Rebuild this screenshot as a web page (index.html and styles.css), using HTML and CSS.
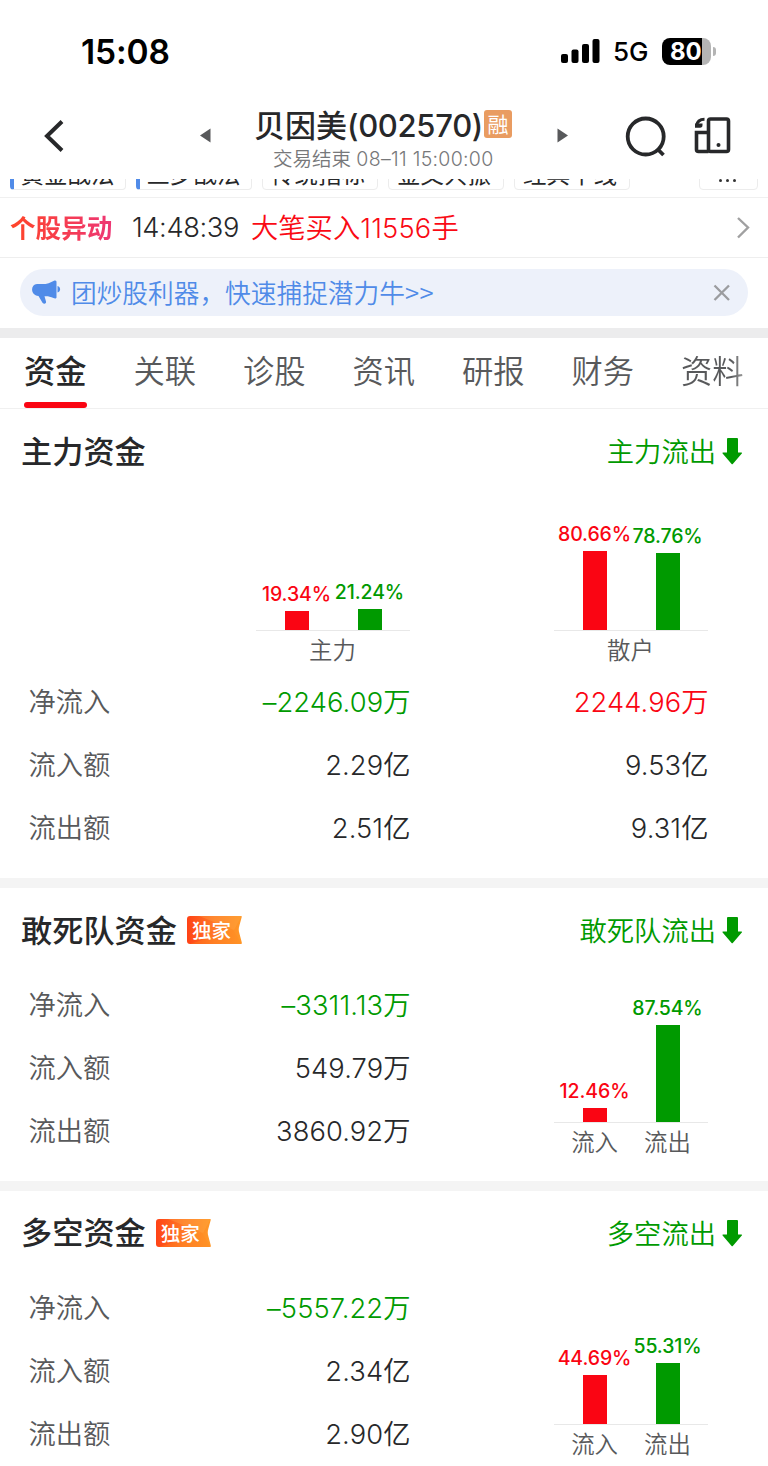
FILE: index.html
```html
<!DOCTYPE html>
<html lang="zh-CN">
<head>
<meta charset="utf-8">
<title>贝因美(002570)</title>
<link rel="stylesheet" href="styles.css">
</head>
<body>
<svg class="defs" width="0" height="0">
  <symbol id="arrow-down" viewBox="0 0 20 27"><path d="M6 0h9a1 1 0 0 1 1 1v13.500h3.500q.9.300.300 1.100l-9 10.300q-.6.500-1.200 0l-9-10.300q-.5-.8.300-1.100H5V1a1 1 0 0 1 1-1z" fill="#009a00"/></symbol>
  <linearGradient id="ribbon-fill" x1="0" y1="0" x2="1" y2="0"><stop offset="0" stop-color="#ff4216"/><stop offset=".5" stop-color="#ff7a27"/><stop offset="1" stop-color="#ff9928"/></linearGradient>
  <symbol id="ribbon" viewBox="0 0 55 28"><path d="M3 0H54Q55.200.3 54.600 1.500L52.300 10Q51.200 13.500 52.300 17L54.800 26.500Q55 28 54 28H3Q0 28 0 25V3Q0 0 3 0z" fill="url(#ribbon-fill)"/><path d="M46 14L54.800 28H3Z" fill="#ff8a20" opacity=".35"/><path d="M12 0H54.500L47 14z" fill="#ffab4d" opacity=".3"/></symbol>
</svg>
<div class="screen">
  <div class="status">
    <span class="clock">15:08</span>
    <svg class="signal" viewBox="0 0 39 25" width="39" height="25"><rect x="0" y="15" width="7" height="9" rx="2"/><rect x="10.500" y="10.500" width="7" height="13.500" rx="2"/><rect x="21" y="5" width="7" height="19" rx="2"/><rect x="31.500" y="0" width="7" height="24" rx="2"/></svg>
    <span class="network">5G</span>
    <div class="battery"><span class="level">80</span></div>
    <i class="battery-tip"></i>
  </div>
  <header class="header">
    <svg class="back" width="22" height="34" viewBox="0 0 22 34"><path d="M18 2.500L3 17 18 31.500" fill="none" stroke="#27282a" stroke-width="4"/></svg>
    <svg class="prev" width="11" height="15" viewBox="0 0 11 15"><path d="M10.500.5v14L0 7.500z" fill="#58595b"/></svg>
    <div class="stock">
      <div class="stock-line"><span class="stock-name">贝因美<span class="code">(002570)</span></span><span class="margin-tag">融</span></div>
      <div class="stock-time">交易结束 <span class="when">08–11 15:00:00</span></div>
    </div>
    <svg class="next" width="11" height="15" viewBox="0 0 11 15"><path d="M.5.5v14L11 7.500z" fill="#58595b"/></svg>
    <svg class="search" width="42" height="42" viewBox="0 0 42 42" fill="none" stroke="#27282a" stroke-width="3.800"><circle cx="20.700" cy="20.500" r="18"/><path d="M32 32.500L38.500 39"/></svg>
    <svg class="device" width="37" height="38" viewBox="0 0 37 38" fill="none" stroke="#27282a" stroke-width="3.600"><rect x="14.500" y="3" width="20" height="32.500" rx="2"/><path d="M14.500 16.500H2.500v17q0 2 2 2H14.500"/><path d="M10.500 3.200Q3.400 3.200 2.400 10" stroke-width="3"/><path d="M1 7.500H8.500V9Q8.500 11.800 6 11.800H1z" fill="#27282a" stroke="none"/><circle cx="24.500" cy="29" r="2" fill="#27282a" stroke="none"/></svg>
  </header>
  <div class="chips">
    <span class="chip hot">黄金战法</span><span class="chip hot">三步战法</span><span class="chip">传统指标</span><span class="chip">金叉共振</span><span class="chip">经典中线</span><span class="chip more"><i></i><i></i><i></i></span>
  </div>
  <div class="alert">
    <span class="alert-title">个股异动</span><span class="alert-time">14:48:39</span><span class="alert-text">大笔买入<span class="lots">11556</span>手</span>
    <svg class="chevron" width="14" height="24" viewBox="0 0 14 24"><path d="M2 2L12 11.500 2 21.500" fill="none" stroke="#a0a0a1" stroke-width="2.400"/></svg>
  </div>
  <div class="promo">
    <div class="pill">
      <svg width="29" height="25" viewBox="0 0 29 25" fill="#508be8"><path d="M8 4C14 4.500 18 3 22 .7 24 0 24.500 1 24.500 2V17.500C24 19 22.500 18.500 21.500 18 17.500 16 14.500 16 12.500 16.300L14 21.500C14.500 24 11.500 24.500 10.200 22.200L6.500 16C-1.800 15 -1.800 4.700 5 4z"/><path d="M25.500 6C29 7 29 11.500 25.500 12.500z"/></svg>
      <span class="promo-text">团炒股利器，快速捕捉潜力牛<span class="more-mark">&gt;&gt;</span></span>
      <svg class="close" width="18" height="18" viewBox="0 0 18 18"><path d="M1.500 1.500L16 16M16 1.500L1.500 16" stroke="#9b9c9f" stroke-width="2.300" fill="none"/></svg>
    </div>
  </div>
  <nav class="tabs"><span class="tab active">资金</span><span class="tab">关联</span><span class="tab">诊股</span><span class="tab">资讯</span><span class="tab">研报</span><span class="tab">财务</span><span class="tab last">资料</span></nav>

  <section class="card main-card">
    <div class="card-head"><h2>主力资金</h2><span class="trend">主力流出</span><svg class="arrow"><use href="#arrow-down"/></svg></div>
    <div class="charts">
      <div class="chart">
        <div class="bars"><div class="col red"><span>19.34%</span><i style="height:19px"></i></div><div class="col green"><span>21.24%</span><i style="height:21px"></i></div></div>
        <div class="axis">主力</div>
      </div>
      <div class="chart">
        <div class="bars"><div class="col red"><span>80.66%</span><i style="height:79px"></i></div><div class="col green"><span>78.76%</span><i style="height:77px"></i></div></div>
        <div class="axis">散户</div>
      </div>
    </div>
    <div class="rows">
      <div class="row"><span class="label">净流入</span><span class="val green"><b>–2246.09</b>万</span><span class="val red"><b>2244.96</b>万</span></div>
      <div class="row"><span class="label">流入额</span><span class="val"><b>2.29</b>亿</span><span class="val"><b>9.53</b>亿</span></div>
      <div class="row"><span class="label">流出额</span><span class="val"><b>2.51</b>亿</span><span class="val"><b>9.31</b>亿</span></div>
    </div>
  </section>

  <section class="card">
    <div class="card-head"><h2>敢死队资金</h2><span class="exclusive"><svg><use href="#ribbon"/></svg><em>独家</em></span><span class="trend">敢死队流出</span><svg class="arrow"><use href="#arrow-down"/></svg></div>
    <div class="split">
      <div class="rows">
        <div class="row"><span class="label">净流入</span><span class="val green"><b>–3311.13</b>万</span></div>
        <div class="row"><span class="label">流入额</span><span class="val"><b>549.79</b>万</span></div>
        <div class="row"><span class="label">流出额</span><span class="val"><b>3860.92</b>万</span></div>
      </div>
      <div class="chart">
        <div class="bars"><div class="col red"><span>12.46%</span><i style="height:14px"></i></div><div class="col green"><span>87.54%</span><i style="height:97px"></i></div></div>
        <div class="axis pair"><span>流入</span><span>流出</span></div>
      </div>
    </div>
  </section>

  <section class="card">
    <div class="card-head"><h2>多空资金</h2><span class="exclusive"><svg><use href="#ribbon"/></svg><em>独家</em></span><span class="trend">多空流出</span><svg class="arrow"><use href="#arrow-down"/></svg></div>
    <div class="split">
      <div class="rows">
        <div class="row"><span class="label">净流入</span><span class="val green"><b>–5557.22</b>万</span></div>
        <div class="row"><span class="label">流入额</span><span class="val"><b>2.34</b>亿</span></div>
        <div class="row"><span class="label">流出额</span><span class="val"><b>2.90</b>亿</span></div>
      </div>
      <div class="chart">
        <div class="bars"><div class="col red"><span>44.69%</span><i style="height:49px"></i></div><div class="col green"><span>55.31%</span><i style="height:61px"></i></div></div>
        <div class="axis pair"><span>流入</span><span>流出</span></div>
      </div>
    </div>
  </section>
</div>
</body>
</html>
```
FILE: styles.css
```css
* { box-sizing: border-box; }
body { margin: 0; background: #fff; }
.defs { display: block; height: 0; }
.screen {
  width: 768px; height: 1466px; overflow: hidden; background: #fff;
  font-family: "Noto Sans CJK SC", sans-serif; font-weight: 350; color: #27282a; white-space: nowrap;
}
.screen svg { flex: none; display: block; }
i, em, b { font-style: normal; font-weight: inherit; }
.clock, .network, .level, .code, .when, .alert-time, .lots, .col span, .val b { font-family: Inter, sans-serif; }

.status { display: flex; align-items: center; height: 102px; padding-left: 81px; color: #000; }
.clock { width: 480px; padding-top: 1px; font-size: 33.500px; font-weight: 600; line-height: 40px; letter-spacing: -.1px; }
.signal { fill: #000; }
.network { width: 49px; margin-left: 12px; padding: 2px 0 0 1px; font-size: 26px; font-weight: 500; line-height: 30px; }
.battery { width: 49px; height: 27px; margin-left: 1px; border-radius: 8px; overflow: hidden; background: linear-gradient(90deg, #000 40px, #b4b4b4 40px); }
.level { display: block; padding-left: 8px; color: #fff; font-size: 24px; font-weight: 700; line-height: 27px; }
.battery-tip { width: 3px; height: 9px; margin-left: 2px; border-radius: 0 4px 4px 0; background: #b4b4b4; }

.header { display: flex; align-items: flex-start; height: 77px; padding-left: 44px; }
.back { margin-top: 17px; }
.prev { margin: 26px 0 0 134px; }
.stock { width: 346px; }
.stock-line { display: flex; align-items: flex-start; height: 43px; padding-left: 43px; }
.stock-name { width: 229px; font-size: 31px; font-weight: 500; line-height: 44px; }
.code { font-size: 31px; font-weight: 450; letter-spacing: -.3px; }
.margin-tag { width: 28px; height: 28px; margin: 8px 0 0 1px; border-radius: 3px; background: #e99c61; color: #fff; font-size: 21px; font-weight: 400; line-height: 27px; text-align: center; }
.stock-time { padding: 2px 0 0 62px; color: #77787a; font-size: 19.500px; line-height: 22px; }
.when { margin-left: 1px; letter-spacing: .3px; }
.next { margin-top: 26px; }
.search { margin: 14px 0 0 57px; }
.device { margin: 14px 0 0 27px; }

.chips { display: flex; align-items: flex-end; height: 19px; padding: 0 10px 7px; overflow: hidden; border-bottom: 1px solid #f0f0f0; }
.chip { flex: none; width: 116px; height: 42px; margin-right: 10px; padding-right: 4px; border: 1px solid #ececec; border-radius: 4px; font-size: 23.500px; font-weight: 400; line-height: 48px; text-align: center; }
.chip.hot { border-left: 4px solid #508be8; }
.chip.more { display: flex; justify-content: center; align-items: flex-end; gap: 4px; width: 59px; margin: 0 0 0 auto; padding: 0 2px 7px 0; }
.more i { width: 3px; height: 3px; border-radius: 50%; background: #333; }

.alert { display: flex; align-items: center; height: 60px; padding: 0 18px 0 10px; border-bottom: 1px solid #eee; font-size: 27.300px; line-height: 58px; }
.alert-title { width: 122px; font-size: 25.600px; font-weight: 700; line-height: 54px; padding-bottom: 2px; color: transparent; background: linear-gradient(90deg, #ff4528, #ed3676 104px); background-clip: text; -webkit-background-clip: text; }
.alert-time { width: 119px; padding-top: 1px; font-size: 27.300px; letter-spacing: -.4px; }
.alert-text { color: #fa0a14; }
.lots { letter-spacing: .2px; }
.chevron { margin-left: auto; }
.promo { height: 80px; padding: 11px 20px 0; border-bottom: 10px solid #ececed; }
.pill { display: flex; align-items: center; height: 47px; padding: 0 17px 0 12px; border-radius: 24px; background: #edf1fa; color: #508be8; }
.promo-text { margin-left: 10px; padding-bottom: 2px; font-size: 25.700px; line-height: 45px; }
.more-mark { letter-spacing: .4px; }
.close { margin-left: auto; }

.tabs { display: flex; gap: 46.500px; height: 71px; padding-left: 24px; border-bottom: 1px solid #f0f0f0; }
.tab { flex: none; width: 63px; height: 70px; color: #58595b; font-size: 31.300px; line-height: 63px; }
.tab.active { color: #27282a; font-weight: 500; }
.tab.active::after { content: ""; display: block; height: 6px; margin-top: 1px; border-radius: 3px; background: #fa0513; }
.tab.last { color: transparent; background: linear-gradient(90deg, #58595b 50px, #999 62px); background-clip: text; -webkit-background-clip: text; }

.card { height: 302.500px; border-bottom: 10px solid #f4f4f4; }
.main-card { height: 479px; }
.card-head { display: flex; align-items: center; height: 85px; padding: 0 26px 0 21px; }
h2 { margin: 0; padding-bottom: 4px; font-size: 31.200px; font-weight: 500; line-height: 46px; }
.exclusive { position: relative; width: 55px; height: 28px; margin: -1px 0 0 10px; }
.exclusive svg { width: 55px; height: 28px; }
.exclusive em { position: absolute; left: 5px; top: 0; color: #fff; font-size: 19.500px; font-weight: 500; line-height: 28px; }
.trend { margin-left: auto; padding-bottom: 3px; color: #009a00; font-size: 27.300px; line-height: 40px; }
.arrow { width: 20px; height: 27px; margin-left: 6px; }

.charts { display: flex; justify-content: space-between; height: 177px; padding: 0 60px 0 256px; }
.chart { width: 154px; }
.bars { display: flex; justify-content: center; align-items: flex-end; gap: 3px; height: 137px; border-bottom: 1px solid #e8e8e8; }
.col { display: flex; flex-direction: column; align-items: center; width: 70px; }
.col span { font-size: 19.500px; font-weight: 450; line-height: 24px; margin-bottom: 5px; letter-spacing: -.1px; }
.col i { width: 24px; background: currentColor; }
.axis { padding-right: 1px; color: #58595b; font-size: 23.400px; line-height: 37px; text-align: center; }
.axis.pair { display: flex; justify-content: center; gap: 26px; padding-left: 1px; }
.red { color: #fa0513; }
.green { color: #009a00; }
.row { display: flex; height: 63px; padding-left: 28.500px; font-size: 27.300px; line-height: 59px; }
.label { flex: none; width: 132px; color: #58595b; }
.val { flex: none; width: 250px; text-align: right; }
.val + .val { width: 298px; }
.val b { font-size: 27.300px; letter-spacing: .1px; }
.split { display: flex; justify-content: space-between; padding-right: 60px; }
.split .rows { padding-top: 1px; }
.split .bars { height: 149.500px; }
```
